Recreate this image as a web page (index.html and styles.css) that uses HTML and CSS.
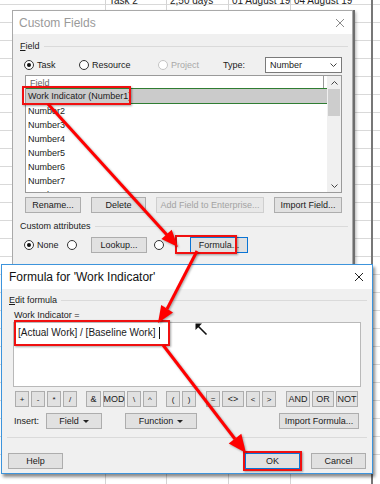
FILE: index.html
```html
<!DOCTYPE html>
<html lang="en">
<head>
    <meta charset="UTF-8">
    <meta name="viewport" content="width=device-width, initial-scale=1.0">
    <title>Custom Fields - Formula</title>
    <link rel="stylesheet" href="styles.css">
</head>
<body>
<div class="desk">
    <div class="sheet">
        <div class="col c0"></div>
        <div class="col c1"><span class="cell-text">Task 2</span></div>
        <div class="col c2"><span class="cell-text">2,50 days</span></div>
        <div class="col c3"><span class="cell-text">01 August 19</span></div>
        <div class="col c4"><span class="cell-text">04 August 19</span></div>
        <div class="col c5"></div>
    </div>

    <div class="dialog custom-fields">
        <div class="title-bar">
            <span class="title">Custom Fields</span>
            <svg class="close" width="10" height="10" viewBox="0 0 10 10"><path d="M1 1L9 9M9 1L1 9"/></svg>
        </div>
        <div class="dialog-body">
            <div class="group-label"><span><u>F</u>ield</span><i></i></div>
            <div class="field-type-row">
                <span class="radio-item task"><span class="radio checked"></span>Task</span>
                <span class="radio-item resource"><span class="radio"></span>Resource</span>
                <span class="radio-item project disabled"><span class="radio"></span>Project</span>
                <span class="type-label">Type:</span>
                <span class="select">Number<svg width="7" height="4" viewBox="0 0 7 4"><path d="M0.5 0.5L3.5 3.5L6.5 0.5"/></svg></span>
            </div>
            <div class="listbox">
                <div class="list-items">
                    <div class="list-head"><span>Field</span></div>
                    <div class="list-row selected">Work Indicator (Number1)</div>
                    <div class="list-row">Number2</div>
                    <div class="list-row">Number3</div>
                    <div class="list-row">Number4</div>
                    <div class="list-row">Number5</div>
                    <div class="list-row">Number6</div>
                    <div class="list-row">Number7</div>
                    <div class="list-row">Number8</div>
                </div>
                <div class="scrollbar">
                    <div class="scroll-btn"><svg width="7" height="4" viewBox="0 0 7 4"><path d="M0.5 3.5L3.5 0.5L6.5 3.5"/></svg></div>
                    <div class="thumb"></div>
                    <div class="scroll-space"></div>
                    <div class="scroll-btn"><svg width="7" height="4" viewBox="0 0 7 4"><path d="M0.5 0.5L3.5 3.5L6.5 0.5"/></svg></div>
                </div>
            </div>
            <div class="button-row">
                <span class="btn rename">Rename...</span>
                <span class="btn delete">Delete</span>
                <span class="btn enterprise disabled">Add Field to Enterprise...</span>
                <span class="btn import-field">Import Field...</span>
            </div>
            <div class="group-label"><span>Custom attributes</span><i></i></div>
            <div class="attr-row">
                <span class="radio-item none"><span class="radio checked"></span>None</span>
                <span class="radio lone"></span>
                <span class="btn lookup">Lookup...</span>
                <span class="radio lone"></span>
                <span class="btn formula focused">Formula...</span>
            </div>
        </div>
    </div>

    <div class="dialog formula-dialog">
        <div class="title-bar">
            <span class="title">Formula for 'Work Indicator'</span>
            <svg class="close" width="10" height="10" viewBox="0 0 10 10"><path d="M1 1L9 9M9 1L1 9"/></svg>
        </div>
        <div class="dialog-body">
            <div class="group-label"><span><u>E</u>dit formula</span><i></i></div>
            <div class="formula-name">Work Indicator =</div>
            <div class="formula-box">[Actual Work] / [Baseline Work]<span class="caret"></span></div>
            <div class="ops-row">
                <div class="op-group">
                    <span class="op">+</span><span class="op">-</span><span class="op">*</span><span class="op">/</span>
                </div>
                <div class="op-group">
                    <span class="op amp">&amp;</span><span class="op wide">MOD</span><span class="op">\</span><span class="op">^</span>
                </div>
                <div class="op-group">
                    <span class="op">(</span><span class="op">)</span>
                </div>
                <div class="op-group">
                    <span class="op">=</span><span class="op wide">&lt;&gt;</span><span class="op">&lt;</span><span class="op">&gt;</span>
                </div>
                <div class="op-group">
                    <span class="op and">AND</span><span class="op or">OR</span><span class="op not">NOT</span>
                </div>
            </div>
            <div class="insert-row">
                <span class="insert-label">Insert:</span>
                <span class="btn menu field-menu">Field<svg width="6" height="3" viewBox="0 0 6 3"><path d="M0 0H6L3 3Z"/></svg></span>
                <span class="btn menu function-menu">Function<svg width="6" height="3" viewBox="0 0 6 3"><path d="M0 0H6L3 3Z"/></svg></span>
                <span class="btn import-formula">Import Formula...</span>
            </div>
            <div class="separator"></div>
            <div class="footer-row">
                <span class="btn help">Help</span>
                <span class="btn ok focused">OK</span>
                <span class="btn cancel">Cancel</span>
            </div>
        </div>
    </div>

    <div class="mark mark-field"></div>
    <div class="mark mark-formula-btn"></div>
    <div class="mark mark-formula-text"></div>
    <div class="mark mark-ok"></div>

    <svg class="arrows" width="380" height="484" viewBox="0 0 380 484">
        <line x1="48" y1="104" x2="167" y2="235"/>
        <polygon points="178,247 161.4,239.1 171.7,229.7"/>
        <line x1="197" y1="251" x2="167" y2="309"/>
        <polygon points="158,323 161.2,304.9 173,312.4"/>
        <line x1="163" y1="345" x2="235" y2="439"/>
        <polygon points="246,453 228.7,443.6 241.3,433.8"/>
    </svg>

    <svg class="pointer" width="14" height="14" viewBox="0 0 14 14">
        <path class="pointer-tail" d="M2.5 2.5L11.5 11.5"/>
        <path class="pointer-head" d="M0.5 0.5H7L0.5 7Z"/>
    </svg>
</div>
</body>
</html>
```

FILE: styles.css
```css
* {
    margin: 0;
    padding: 0;
    box-sizing: border-box;
}

body {
    font-family: 'Liberation Sans', Arial, sans-serif;
    font-size: 9px;
    color: #1a1a1a;
    background: #fff;
}

.desk {
    position: relative;
    width: 380px;
    height: 484px;
    overflow: hidden;
    background: #fff;
}

/* project sheet behind the dialogs */
.sheet {
    position: absolute;
    inset: 0;
    display: flex;
    background: repeating-linear-gradient(to bottom, transparent 0 17px, #d9d9d9 17px 18px);
    background-position: 0 -13px;
}

.col {
    height: 100%;
    border-right: 1px solid #d4d4d4;
    font-size: 10px;
    color: #222;
}

.c0 { width: 106px; }
.c1 { width: 61px; }
.c2 { width: 62px; }
.c3 { width: 62px; }
.c4 { width: 82px; border-right: 2px solid #777; }
.c5 { flex: 1; border-right: none; }

.cell-text {
    display: block;
    margin-top: -5px;
    padding-left: 3px;
    white-space: nowrap;
}

/* dialogs */
.dialog {
    position: absolute;
    background: #f0f0f0;
    display: flex;
    flex-direction: column;
}

.custom-fields {
    left: 12px;
    top: 10px;
    width: 341px;
    height: 290px;
    border: 1px solid #a9a9a9;
    box-shadow: 2px 0 0 #6e6e6e, 3px 2px 3px rgba(0, 0, 0, 0.3);
}

.formula-dialog {
    left: 1px;
    top: 264px;
    width: 372px;
    height: 210px;
    border: 1px solid #3d94dc;
    box-shadow: 2px 3px 3px rgba(0, 0, 0, 0.45);
}

.title-bar {
    background: #fff;
    height: 23px;
    display: flex;
    align-items: center;
    justify-content: space-between;
    padding: 0 7px 0 6px;
}

.formula-dialog .title-bar {
    height: 24px;
    padding: 0 8px 0 7px;
}

.title {
    font-size: 12px;
    color: #9a9a9a;
}

.formula-dialog .title {
    color: #111;
}

.close path {
    stroke: #8a8a8a;
    stroke-width: 1;
    fill: none;
}

.formula-dialog .close path {
    stroke: #222;
}

.dialog-body {
    display: flex;
    flex-direction: column;
}

.custom-fields .dialog-body {
    padding: 0 10px 0 12px;
}

.formula-dialog .dialog-body {
    padding: 0 11px 0 12px;
}

.group-label {
    display: flex;
    align-items: center;
    height: 12px;
    margin: 6px -6px 0 -5px;
    white-space: nowrap;
}

.group-label i {
    flex: 1;
    height: 1px;
    margin-left: 4px;
    background: #dadada;
}

.formula-dialog .group-label {
    margin: 5px -6px 0 -5px;
}

/* radios */
.radio {
    display: inline-block;
    width: 10px;
    height: 10px;
    border: 1px solid #333;
    border-radius: 50%;
    background: #fff;
    position: relative;
    flex-shrink: 0;
}

.radio.checked::after {
    content: "";
    position: absolute;
    left: 2px;
    top: 2px;
    width: 4px;
    height: 4px;
    border-radius: 50%;
    background: #111;
}

.radio-item {
    display: flex;
    align-items: center;
    gap: 3px;
}

.radio-item.disabled {
    color: #a8a8a8;
}

.radio-item.disabled .radio {
    border-color: #c4c4c4;
}

.field-type-row {
    display: flex;
    align-items: center;
    height: 17px;
    margin: 4px 0 0 -1px;
}

.task { width: 55px; }
.resource { width: 79px; }
.project { width: 65px; }
.type-label { width: 42px; }

.select {
    flex: 1;
    height: 16px;
    background: #fff;
    border: 1px solid #7a7a7a;
    display: flex;
    align-items: center;
    justify-content: space-between;
    padding: 0 4px 0 4px;
}

.select path,
.scroll-btn path {
    stroke: #444;
    stroke-width: 1;
    fill: none;
}

/* list */
.listbox {
    display: flex;
    height: 118px;
    margin-top: 2px;
    background: #fff;
    border: 1px solid #9a9a9a;
    overflow: hidden;
}

.list-items {
    flex: 1;
    overflow: hidden;
}

.list-head {
    height: 12px;
    display: flex;
    align-items: center;
    color: #666;
}

.list-head span {
    width: 298px;
    height: 100%;
    padding: 2px 0 0 4px;
    border-right: 1px solid #999;
}

.list-row {
    height: 14px;
    line-height: 14px;
    padding-left: 2px;
    white-space: nowrap;
}

.list-row.selected {
    height: 16px;
    line-height: 14px;
    background: #cbcbcb;
    border-top: 1px solid #2f7d32;
    border-bottom: 1px solid #2f7d32;
}

.scrollbar {
    width: 14px;
    background: #f0f0f0;
    display: flex;
    flex-direction: column;
}

.scroll-btn {
    height: 13px;
    display: flex;
    align-items: center;
    justify-content: center;
}

.thumb {
    height: 27px;
    margin: 0 1px;
    background: #cdcdcd;
}

.scroll-space {
    flex: 1;
}

/* buttons */
.btn {
    display: flex;
    align-items: center;
    justify-content: center;
    height: 16px;
    background: #e1e1e1;
    border: 1px solid #adadad;
    white-space: nowrap;
}

.btn.disabled {
    background: #e8e8e8;
    border-color: #cfcfcf;
    color: #a3a3a3;
}

.btn.focused {
    border-color: #0a74d4;
}

.button-row {
    display: flex;
    justify-content: space-between;
    margin-top: 4px;
}

.rename { width: 56px; }
.delete { width: 55px; }
.enterprise { width: 108px; }
.import-field { width: 68px; }

.attr-row {
    display: flex;
    align-items: center;
    height: 17px;
    margin-top: 4px;
}

.button-row + .group-label {
    margin-top: 7px;
}

.none { width: 43px; margin-left: -1px; }
.radio.lone { margin-right: 14px; }
.lookup { width: 56px; margin-right: 7px; }
.formula { width: 58px; margin-left: 12px; }

/* formula dialog */
.formula-name {
    height: 12px;
    line-height: 12px;
    margin-top: 3px;
}

.formula-box {
    height: 65px;
    margin: 1px 0 0 -1px;
    padding: 4px 0 0 4px;
    background: #fff;
    border: 1px solid #b9b9b9;
    font-size: 10px;
    line-height: 12px;
    display: flex;
    align-items: flex-start;
}

.caret {
    width: 1px;
    height: 12px;
    margin-left: 4px;
    background: #111;
}

.ops-row {
    display: flex;
    margin: 4px 0 0 1px;
    gap: 9px;
}

.op-group {
    display: flex;
    gap: 2px;
}

.op {
    width: 14px;
    height: 16px;
    display: flex;
    align-items: center;
    justify-content: center;
    background: #e1e1e1;
    border: 1px solid #adadad;
    font-size: 8px;
}

.op.wide,
.op.and,
.op.or,
.op.not {
    font-size: 9px;
}

.op.amp { width: 15px; font-size: 9px; }
.op.wide { width: 22px; }
.op.and { width: 24px; }
.op.or { width: 22px; }
.op.not { width: 22px; }

.ops-row .op-group:nth-child(4),
.ops-row .op-group:nth-child(5) {
    margin-left: 1px;
}

.insert-row {
    display: flex;
    align-items: center;
    margin: 6px 2px 0 0;
}

.insert-label { width: 32px; }

.menu {
    gap: 4px;
}

.menu path {
    fill: #222;
}

.field-menu { width: 56px; }
.function-menu { width: 72px; margin-left: 23px; }
.import-formula { width: 80px; margin-left: auto; }

.separator {
    height: 1px;
    margin: 8px -6px 0 -7px;
    background: #dadada;
}

.footer-row {
    display: flex;
    margin: 15px -5px 0 -6px;
}

.help { width: 55px; }
.ok { width: 55px; margin-left: auto; }
.cancel { width: 55px; margin-left: 11px; }

/* annotations */
.mark {
    position: absolute;
    border: 2px solid #f01010;
    box-shadow: 1px 1px 2px rgba(0, 0, 0, 0.35);
}

.mark-field { left: 22px; top: 86px; width: 109px; height: 19px; }
.mark-formula-btn { left: 175px; top: 235px; width: 62px; height: 19px; }
.mark-formula-text { left: 14px; top: 320px; width: 156px; height: 26px; }
.mark-ok { left: 243px; top: 451px; width: 59px; height: 20px; }

.arrows {
    position: absolute;
    left: 0;
    top: 0;
    filter: drop-shadow(1px 1px 1px rgba(0, 0, 0, 0.35));
}

.arrows line {
    stroke: #f00;
    stroke-width: 3;
}

.arrows polygon {
    fill: #f00;
}

.pointer {
    position: absolute;
    left: 195px;
    top: 323px;
}

.pointer-tail {
    stroke: #111;
    stroke-width: 1.6;
}

.pointer-head {
    fill: #111;
}
```
